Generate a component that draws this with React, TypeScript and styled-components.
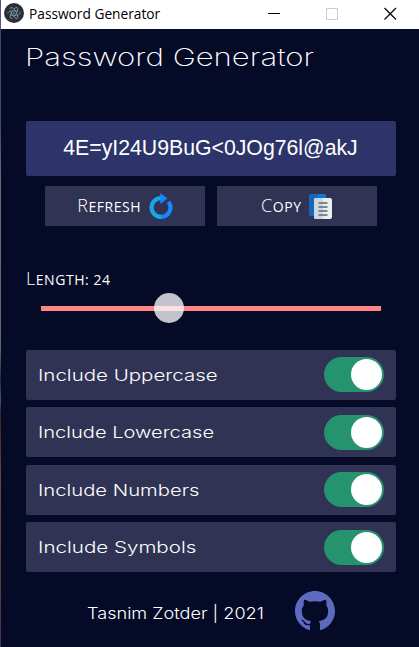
import React, { useState } from "react";
import styled, { createGlobalStyle } from "styled-components";

const GlobalStyle = createGlobalStyle`
  * { box-sizing: border-box; }
  html, body { margin: 0; padding: 0; background: #050a26; overflow: hidden; }
`;

const Window = styled.div`
  width: 419px;
  height: 647px;
  display: flex;
  flex-direction: column;
  background: #050a26;
  color: #fff;
  overflow: hidden;
  font-family: "Inter", "Liberation Sans", sans-serif;
`;

const TitleBar = styled.header`
  height: 29px;
  flex: none;
  display: flex;
  align-items: center;
  padding: 0 22px 3px 3px;
  background: #fff;
  color: #000;
  border-left: 1px solid #55558a;
`;

const AppIcon = styled.svg`
  width: 20px;
  height: 20px;
  margin-right: 5px;
  flex: none;
`;

const Label = styled.span<{ $size: number; $stretch?: number; $weight?: number; $font?: string }>`
  display: inline-block;
  white-space: nowrap;
  font-family: ${(p) => p.$font ?? '"Inter"'}, sans-serif;
  font-size: ${(p) => p.$size}px;
  font-weight: ${(p) => p.$weight ?? 300};
  line-height: 1;
  transform: scaleX(${(p) => p.$stretch ?? 1});
  transform-origin: left center;
`;

const Controls = styled.div`
  margin-left: auto;
  display: flex;
  gap: 45px;
`;

const ControlIcon = styled.svg`
  width: 13px;
  height: 13px;
  display: block;
`;

const Content = styled.main`
  flex: 1;
  display: flex;
  flex-direction: column;
  padding: 0 23px 0 25px;
  border-left: 1px solid;
  border-image: linear-gradient(#45426e 0, #4c456d 100px, #706a70 150px, #666568 320px, #252737 350px, #514878 370px, #382329 385px, #6b4935 450px, #45364a 618px) 1;
`;

const Heading = styled.h1`
  height: 92px;
  margin: 0 0 0 -1px;
  padding-top: 10px;
  line-height: 1;
`;

const Password = styled.output`
  height: 55px;
  display: flex;
  align-items: center;
  justify-content: center;
  padding: 0 1px 1px 0;
  border-radius: 2px;
  background: #2d346a;
  font: 21.25px "Liberation Sans", sans-serif;
`;

const Actions = styled.div`
  display: flex;
  gap: 12px;
  margin: 10px 0 0 19px;
`;

const Action = styled.button`
  width: 160px;
  height: 40px;
  display: flex;
  align-items: center;
  justify-content: center;
  gap: 7.5px;
  padding: 0 0 1px;
  border: 0;
  background: #303353;
  color: #fff;
`;

const ActionIcon = styled.svg`
  width: 24px;
  height: 26px;
  flex: none;
`;

const SmallCaps = styled.span`
  display: inline-block;
  font-family: "Open Sans", sans-serif;
  font-size: 14px;
  font-weight: 400;
  line-height: 26px;
  letter-spacing: 0.55px;
  text-transform: uppercase;
  white-space: nowrap;
  &::first-letter { font-size: 18px; font-weight: 300; }
`;

const LengthField = styled.section`
  height: 124px;
  display: flex;
  flex-direction: column;
  padding-top: 39px;
`;

const Track = styled.div`
  height: 30px;
  margin: 0 15px;
  padding-left: 113px;
  background: linear-gradient(#ff8484, #ff8484) 0 13px / 100% 5px no-repeat;
`;

const Thumb = styled.div`
  width: 30px;
  height: 30px;
  border-radius: 50%;
  background: linear-gradient(#c2c3cd 13px, #ffe0e0 13px 18px, #c2c3cd 18px);
`;

const Options = styled.section`
  display: flex;
  flex-direction: column;
  gap: 7.4px;
`;

const Option = styled.div`
  height: 50px;
  display: flex;
  align-items: center;
  justify-content: space-between;
  padding: 0 12px 0.3px;
  border-radius: 2px;
  background: #303353;
`;

const Switch = styled.button<{ $on: boolean }>`
  width: 60px;
  height: 35px;
  display: flex;
  align-items: center;
  justify-content: ${(p) => (p.$on ? "flex-end" : "flex-start")};
  padding: 0 2px;
  border: 0;
  border-radius: 18px;
  background: ${(p) => (p.$on ? "#26936f" : "#777a91")};
`;

const Knob = styled.span`
  width: 31px;
  height: 31px;
  border-radius: 50%;
  background: #fff;
`;

const Footer = styled.footer`
  display: flex;
  align-items: center;
  justify-content: space-between;
  margin: 19px 61px 0 61px;
  height: 40px;
`;

const Credit = styled.div`
  padding-top: 3px;
`;

const GithubLogo = styled.svg`
  width: 40px;
  height: 40px;
  flex: none;
`;

const options = [
  { name: "Include Uppercase", stretch: 1.28 },
  { name: "Include Lowercase", stretch: 1.255 },
  { name: "Include Numbers", stretch: 1.265 },
  { name: "Include Symbols", stretch: 1.285 },
];

export default function App() {
  const [enabled, setEnabled] = useState([true, true, true, true]);
  const toggle = (index: number) => setEnabled((all) => all.map((on, i) => (i === index ? !on : on)));

  return (
    <>
      <GlobalStyle />
      <Window>
        <TitleBar>
          <AppIcon viewBox="0 0 20 20">
            <circle cx="10" cy="10" r="10" fill="#2b2e3a" />
            <g fill="none" stroke="#9fc5ce" strokeWidth=".7" opacity=".85">
              <ellipse cx="10" cy="10" rx="6.3" ry="2.3" transform="rotate(60 10 10)" strokeDasharray="10 2" />
              <ellipse cx="10" cy="10" rx="6.3" ry="2.3" transform="rotate(-60 10 10)" strokeDasharray="10 2" />
              <ellipse cx="10" cy="10" rx="6.3" ry="2.3" strokeDasharray="11 2" />
            </g>
            <circle cx="10" cy="10" r=".7" fill="#9fc5ce" />
          </AppIcon>
          <Label $size={15} $weight={400} $font={'"Open Sans"'} $stretch={0.915}>Password Generator</Label>
          <Controls>
            <ControlIcon viewBox="0 0 13 13"><path d="M0 6.5h12" stroke="#000" /></ControlIcon>
            <ControlIcon viewBox="0 0 13 13"><path d="M.5 1.5h11v11H.5z" fill="none" stroke="#ccc" /></ControlIcon>
            <ControlIcon viewBox="0 0 13 13"><path d="m.5 1 11.5 11.5M12 1 .5 12.5" stroke="#000" strokeWidth="1.2" /></ControlIcon>
          </Controls>
        </TitleBar>
        <Content>
          <Heading><Label $size={24} $weight={200} $stretch={1.297}>Password Generator</Label></Heading>
          <Password>4E=yI24U9BuG&lt;0JOg76l@akJ</Password>
          <Actions>
            <Action>
              <SmallCaps>Refresh</SmallCaps>
              <ActionIcon viewBox="0 0 24 26">
                <path d="M12 5.1A9.4 9.4 0 0 0 12 23.9" fill="none" stroke="#18a5e5" strokeWidth="4.2" />
                <path d="M12 23.9A9.4 9.4 0 0 0 19.4 8.7" fill="none" stroke="#1688ff" strokeWidth="4.2" />
                <path d="M11.3 0v11l7.2-5.5z" fill="#1688ff" />
              </ActionIcon>
            </Action>
            <Action>
              <SmallCaps>Copy</SmallCaps>
              <ActionIcon viewBox="0 0 24 26">
                <rect x="0" y="1" width="17" height="22" rx="2" fill="#1766bd" />
                <path d="M8.5 1H15a2 2 0 0 1 2 2v4H8.5z" fill="#1976d2" />
                <rect x="5" y="5" width="18" height="21" rx="2" fill="#eceff1" />
                <path d="M14 5H7a2 2 0 0 0-2 2v17a2 2 0 0 0 2 2h7z" fill="#cfd8dc" />
                <path d="M9.5 10h9M9.5 14h9M9.5 18h9M9.5 22h9" stroke="#546e7a" strokeWidth="1.5" />
              </ActionIcon>
            </Action>
          </Actions>
          <LengthField>
            <SmallCaps>Length: 24</SmallCaps>
            <Track><Thumb /></Track>
          </LengthField>
          <Options>
            {options.map((option, i) => (
              <Option key={option.name}>
                <Label $size={16} $stretch={option.stretch}>{option.name}</Label>
                <Switch $on={enabled[i]} aria-label={option.name} onClick={() => toggle(i)}><Knob /></Switch>
              </Option>
            ))}
          </Options>
          <Footer>
            <Credit><Label $size={16} $stretch={1.132}>Tasnim Zotder | 2021</Label></Credit>
            <GithubLogo viewBox="0 0 24 24">
              <path fill="#5c6bc0" d="M12 0C5.37 0 0 5.4 0 12.1c0 5.4 3.7 9.9 9 11.5v-3.1c-2.6.5-3.4-.7-3.8-1.5-.5-1-1.1-1.2-1.7-1.7.9-.3 1.8.2 2.5 1.3.8 1.2 2 1.3 3 1 .1-.7.4-1.3.8-1.6-3.2-.4-5.7-1.7-5.7-6.2 0-1.2.4-2.4 1.3-3.3-.3-.9-.3-2.1.1-3.3 1.2 0 2.3.6 3.2 1.3 2.1-.5 4.5-.5 6.6 0 1-.7 2-1.3 3.2-1.3.5 1.2.5 2.4.2 3.3.8.9 1.2 2.1 1.2 3.3 0 4.5-2.5 5.8-5.7 6.2.6.6.8 1.4.8 2.4v3.2c5.2-1.5 9-6.1 9-11.5C24 5.4 18.63 0 12 0Z" />
            </GithubLogo>
          </Footer>
        </Content>
      </Window>
    </>
  );
}
